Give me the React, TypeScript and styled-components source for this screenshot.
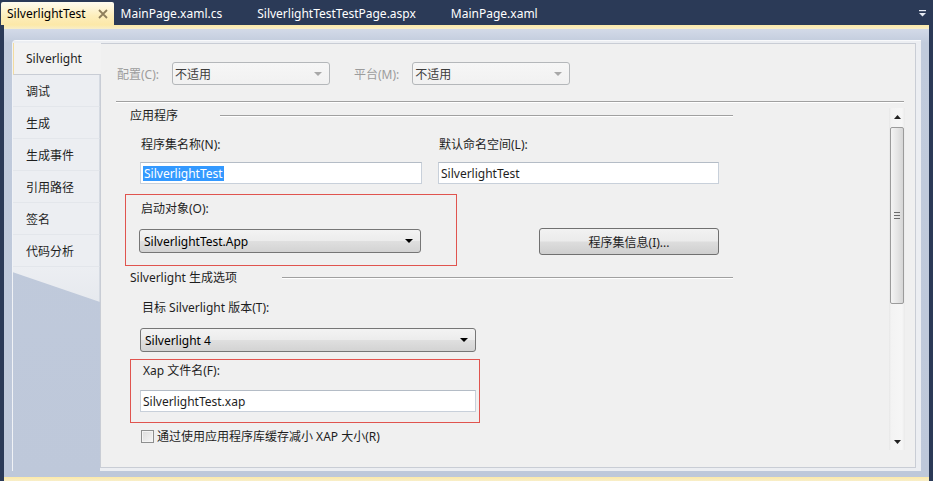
import React from "react";
import styled, { createGlobalStyle, css } from "styled-components";

const GlobalStyle = createGlobalStyle`
  html, body {
    margin: 0;
    padding: 0;
  }
  body {
    background: #293955;
    font-family: "Noto Sans", "Noto Sans CJK SC", sans-serif;
    font-size: 12px;
    color: #1e1e1e;
  }
`;

const Window = styled.div`
  width: 933px;
  height: 481px;
  background: #2b3a57;
  display: flex;
  flex-direction: column;
  overflow: hidden;
`;

const TabStrip = styled.div`
  height: 25px;
  display: flex;
  align-items: flex-end;
  padding: 0 6px 0 1px;
  box-sizing: border-box;
`;

const DocTab = styled.div<{ $active?: boolean }>`
  height: 23px;
  display: flex;
  align-items: center;
  padding: 0 28px 0 7px;
  color: #ffffff;
  font-size: 12px;
  white-space: nowrap;
  ${(p) =>
    p.$active &&
    css`
      background: linear-gradient(#fffcf0, #fdeebb 60%, #fce8a8);
      color: #000;
      padding: 0 6px 0 6px;
      border-radius: 2px 2px 0 0;
    `}
`;

const CloseBox = styled.span`
  display: inline-flex;
  margin-left: 12px;
`;

const Spacer = styled.div`
  flex: 1;
`;

const OverflowButton = styled.div`
  align-self: center;
  display: flex;
  margin-top: 2px;
`;

const YellowBar = styled.div`
  height: 4px;
  margin: 0 4px;
  background: linear-gradient(#fce9a8, #f8eec9);
`;

const Frame = styled.div`
  flex: 1;
  margin: 0 4px;
  padding: 11px 8px 6px 8px;
  background: linear-gradient(#d3dae8, #c1cbdc 14px, #bec8da);
  display: flex;
  min-height: 0;
`;

const Designer = styled.div`
  flex: 1;
  display: flex;
  border-top: 1px solid #f8f9fb;
  border-left: 1px solid #f0f2f6;
  border-radius: 4px 0 0 0;
`;

const SideNav = styled.div`
  width: 87px;
  display: flex;
  flex-direction: column;
`;

const NavList = styled.div`
  padding-top: 2px;
  background: #eceef2;
  display: flex;
  flex-direction: column;
`;

const NavItem = styled.div<{ $selected?: boolean }>`
  height: 32px;
  box-sizing: border-box;
  display: flex;
  align-items: center;
  padding-left: 13px;
  font-size: 12px;
  color: #1e1e1e;
  border-bottom: 1px solid #e3e6eb;
  border-right: 1px solid #d5dae2;
  ${(p) =>
    p.$selected &&
    css`
      position: relative;
      z-index: 1;
      margin-right: -1px;
      border-right: none;
      border-left: 1px solid #f3dca0;
      padding-left: 12px;
      background: #f2f2f2;
      border-bottom: 1px solid #c9cdd5;
    `}
`;

const NavTail = styled.div`
  height: 35px;
  background: linear-gradient(#eceef2, #e6e9ee);
  border-right: 1px solid #d5dae2;
  clip-path: polygon(0 0, 100% 0, 100% 100%, 0 15%);
`;

const PageOuter = styled.div`
  flex: 1;
  display: flex;
  padding: 2px 5px 3px 0;
  background: #eceef2;
`;

const Page = styled.div`
  flex: 1;
  display: flex;
  flex-direction: column;
  background: #f0f0f0;
  border: 1px solid #c9cdd5;
`;

const TopBar = styled.div`
  display: flex;
  align-items: center;
  padding: 18px 0 0 16px;
  height: 23px;
  box-sizing: content-box;
`;

const DimLabel = styled.span`
  color: #9c9c9c;
  margin-right: 13px;
  white-space: nowrap;
`;

const Combo = styled.div<{ $width: number; $disabled?: boolean; $height?: number }>`
  width: ${(p) => p.$width}px;
  height: ${(p) => p.$height ?? 24}px;
  box-sizing: border-box;
  display: flex;
  align-items: center;
  justify-content: space-between;
  padding: 0 7px 0 4px;
  border: 1px solid #767676;
  border-radius: 3px;
  background: linear-gradient(#f3f3f3, #ececec 48%, #dfdfdf 52%, #d3d3d3);
  color: #000;
  font-size: 12px;
  white-space: nowrap;
  ${(p) =>
    p.$disabled &&
    css`
      border-color: #b4b7ba;
      background: linear-gradient(#f6f6f6, #f1f1f1);
      color: #3c3c3c;
      padding-left: 2px;
    `}
`;

const Arrow = styled.span<{ $dim?: boolean }>`
  width: 0;
  height: 0;
  border-left: 4px solid transparent;
  border-right: 4px solid transparent;
  border-top: 4px solid ${(p) => (p.$dim ? "#a8a8a8" : "#000")};
`;

const Gap = styled.div<{ $w: number }>`
  width: ${(p) => p.$w}px;
  flex: none;
`;

const Divider = styled.div`
  margin: 16px 11px 0 15px;
  border-top: 1px solid #a0a0a0;
  border-bottom: 1px solid #ffffff;
`;

const ScrollArea = styled.div`
  margin: 5px 10px 0 15px;
  height: 342px;
  display: flex;
`;

const Content = styled.div`
  flex: 1;
  padding-left: 14px;
  display: flex;
  flex-direction: column;
  overflow: hidden;
`;

const SectionHeader = styled.div<{ $mt?: number }>`
  width: 603px;
  height: 16px;
  margin-top: ${(p) => p.$mt ?? 0}px;
  display: flex;
  align-items: center;
  line-height: 16px;
  white-space: nowrap;
`;

const Rule = styled.div<{ $gap: number }>`
  flex: 1;
  margin-left: ${(p) => p.$gap}px;
  border-top: 1px solid #a0a0a0;
  border-bottom: 1px solid #ffffff;
`;

const FieldRow = styled.div`
  margin: 13px 0 0 10px;
  display: grid;
  grid-template-columns: 282px 281px;
  column-gap: 16px;
`;

const Field = styled.div`
  display: flex;
  flex-direction: column;
`;

const Label = styled.div<{ $indent?: number }>`
  height: 16px;
  line-height: 16px;
  padding-left: ${(p) => p.$indent ?? 1}px;
  white-space: nowrap;
`;

const TextBox = styled.div<{ $width?: number; $mt?: number }>`
  ${(p) => (p.$width ? `width: ${p.$width}px;` : "")}
  height: 22px;
  margin-top: ${(p) => p.$mt ?? 9}px;
  box-sizing: border-box;
  display: flex;
  align-items: center;
  padding-left: 2px;
  background: #ffffff;
  border: 1px solid #c8d0da;
  border-top-color: #b4bcc6;
  white-space: nowrap;
`;

const Selected = styled.span`
  background: #3399ff;
  color: #ffffff;
  padding: 0 1px;
  line-height: 15px;
`;

const StartupRow = styled.div`
  display: flex;
  margin: 10px 0 0 -5px;
`;

const Highlight = styled.div<{ $width: number; $pad: string }>`
  width: ${(p) => p.$width}px;
  box-sizing: border-box;
  border: 1px solid #e0544f;
  padding: ${(p) => p.$pad};
  display: flex;
  flex-direction: column;
`;

const PushButton = styled.div`
  width: 180px;
  height: 27px;
  margin: 34px 0 0 82px;
  box-sizing: border-box;
  display: flex;
  align-items: center;
  justify-content: center;
  border: 1px solid #707070;
  border-radius: 3px;
  background: linear-gradient(#f2f2f2, #ebebeb 48%, #dddddd 52%, #cfcfcf);
`;

const Indented = styled.div<{ $left: number; $top: number }>`
  margin: ${(p) => p.$top}px 0 0 ${(p) => p.$left}px;
  display: flex;
`;

const CheckRow = styled.div`
  margin: 5px 0 0 11px;
  height: 16px;
  display: flex;
  align-items: center;
  white-space: nowrap;
`;

const CheckBox = styled.span`
  width: 13px;
  height: 13px;
  box-sizing: border-box;
  margin-right: 3px;
  border: 1px solid #8e8f8f;
  background: linear-gradient(135deg, #dcdcdc, #f6f6f6);
  box-shadow: inset 0 0 0 1px #f4f4f4;
`;

const ScrollBar = styled.div`
  width: 16px;
  display: flex;
  flex-direction: column;
  background: linear-gradient(to right, #e6e6e6, #f3f3f3 2px, #f6f6f6 13px, #eaeaea);
`;

const ScrollButton = styled.div`
  height: 17px;
  display: flex;
  align-items: center;
  justify-content: center;
`;

const Thumb = styled.div`
  margin: 2px 1px 0 1px;
  height: 177px;
  box-sizing: border-box;
  border: 1px solid #9b9b9b;
  border-radius: 2px;
  background: linear-gradient(to right, #f4f4f4, #e6e6e6 50%, #d6d6d6);
  display: flex;
  align-items: center;
  justify-content: center;
`;

const Grip = styled.div`
  width: 6px;
  height: 7px;
  background: repeating-linear-gradient(#6b6b6b 0 1px, transparent 1px 3px);
`;

function CloseIcon() {
  return (
    <svg width="10" height="10" viewBox="0 0 10 10">
      <path d="M1 1L9 9M9 1L1 9" stroke="#8f7f5c" strokeWidth="1.8" />
    </svg>
  );
}

function OverflowIcon() {
  return (
    <svg width="9" height="7" viewBox="0 0 9 7">
      <rect x="1" y="0" width="7" height="1.2" fill="#e8ecf4" />
      <path d="M1 3H8L4.5 6.5Z" fill="#e8ecf4" />
    </svg>
  );
}

function SmallArrow({ up }: { up?: boolean }) {
  return (
    <svg width="7" height="4" viewBox="0 0 7 4">
      <path d={up ? "M0 4H7L3.5 0Z" : "M0 0H7L3.5 4Z"} fill="#222" />
    </svg>
  );
}

const docTabs = ["MainPage.xaml.cs", "SilverlightTestTestPage.aspx", "MainPage.xaml"];
const navItems = ["Silverlight", "调试", "生成", "生成事件", "引用路径", "签名", "代码分析"];

export default function App() {
  return (
    <>
      <GlobalStyle />
      <Window>
        <TabStrip>
          <DocTab $active>
            SilverlightTest
            <CloseBox>
              <CloseIcon />
            </CloseBox>
          </DocTab>
          {docTabs.map((t) => (
            <DocTab key={t}>{t}</DocTab>
          ))}
          <Spacer />
          <OverflowButton>
            <OverflowIcon />
          </OverflowButton>
        </TabStrip>
        <YellowBar />
        <Frame>
          <Designer>
            <SideNav>
              <NavList>
                {navItems.map((n, i) => (
                  <NavItem key={n} $selected={i === 0}>
                    {n}
                  </NavItem>
                ))}
              </NavList>
              <NavTail />
            </SideNav>
            <PageOuter>
              <Page>
                <TopBar>
                  <DimLabel>配置(C):</DimLabel>
                  <Combo $width={158} $height={23} $disabled>
                    不适用
                    <Arrow $dim />
                  </Combo>
                  <Gap $w={24} />
                  <DimLabel>平台(M):</DimLabel>
                  <Combo $width={158} $height={23} $disabled>
                    不适用
                    <Arrow $dim />
                  </Combo>
                </TopBar>
                <Divider />
                <ScrollArea>
                  <Content>
                    <SectionHeader>
                      应用程序
                      <Rule $gap={42} />
                    </SectionHeader>
                    <FieldRow>
                      <Field>
                        <Label>程序集名称(N):</Label>
                        <TextBox>
                          <Selected>SilverlightTest</Selected>
                        </TextBox>
                      </Field>
                      <Field>
                        <Label>默认命名空间(L):</Label>
                        <TextBox>SilverlightTest</TextBox>
                      </Field>
                    </FieldRow>
                    <StartupRow>
                      <Highlight $width={332} $pad="6px 35px 12px 13px">
                        <Label $indent={2}>启动对象(O):</Label>
                        <Indented $left={0} $top={12}>
                          <Combo $width={282}>
                            SilverlightTest.App
                            <Arrow />
                          </Combo>
                        </Indented>
                      </Highlight>
                      <PushButton>程序集信息(I)...</PushButton>
                    </StartupRow>
                    <SectionHeader $mt={4}>
                      Silverlight 生成选项
                      <Rule $gap={45} />
                    </SectionHeader>
                    <Indented $left={12} $top={14}>
                      <Label $indent={0}>目标 Silverlight 版本(T):</Label>
                    </Indented>
                    <Indented $left={10} $top={12}>
                      <Combo $width={336}>
                        Silverlight 4
                        <Arrow />
                      </Combo>
                    </Indented>
                    <Indented $left={0} $top={7}>
                      <Highlight $width={350} $pad="3px 3px 10px 9px">
                        <Label $indent={3}>Xap 文件名(F):</Label>
                        <TextBox $width={336} $mt={11}>
                          SilverlightTest.xap
                        </TextBox>
                      </Highlight>
                    </Indented>
                    <CheckRow>
                      <CheckBox />
                      通过使用应用程序库缓存减小 XAP 大小(R)
                    </CheckRow>
                  </Content>
                  <ScrollBar>
                    <ScrollButton>
                      <SmallArrow up />
                    </ScrollButton>
                    <Thumb>
                      <Grip />
                    </Thumb>
                    <Spacer />
                    <ScrollButton>
                      <SmallArrow />
                    </ScrollButton>
                  </ScrollBar>
                </ScrollArea>
              </Page>
            </PageOuter>
          </Designer>
        </Frame>
        <YellowBar />
      </Window>
    </>
  );
}
